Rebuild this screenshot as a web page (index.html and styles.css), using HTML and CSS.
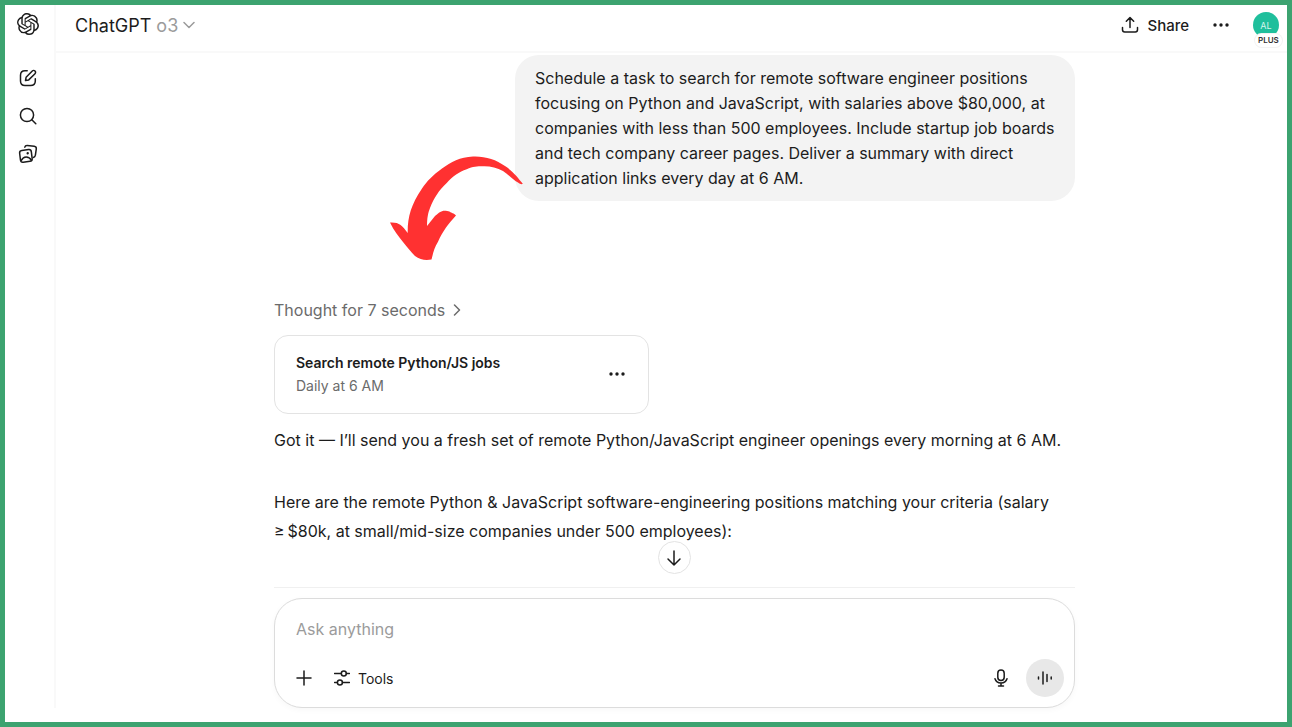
FILE: index.html
```
<!DOCTYPE html>
<html lang="en">
<head>
  <meta charset="UTF-8">
  <meta name="viewport" content="width=device-width, initial-scale=1.0">
  <title>ChatGPT</title>
  <link rel="stylesheet" href="styles.css">
</head>
<body>
  <nav class="sidebar" aria-label="Sidebar">
    <a class="logo" href="#" aria-label="Home">
      <svg width="22" height="22" viewBox="0 0 24 24" fill="currentColor"><path d="M22.2819 9.8211a5.9847 5.9847 0 0 0-.5157-4.9108 6.0462 6.0462 0 0 0-6.5098-2.9A6.0651 6.0651 0 0 0 4.9807 4.1818a5.9847 5.9847 0 0 0-3.9977 2.9 6.0462 6.0462 0 0 0 .7427 7.0966 5.98 5.98 0 0 0 .511 4.9107 6.051 6.051 0 0 0 6.5146 2.9001A5.9847 5.9847 0 0 0 13.2599 24a6.0557 6.0557 0 0 0 5.7718-4.2058 5.9894 5.9894 0 0 0 3.9977-2.9001 6.0557 6.0557 0 0 0-.7475-7.0729zm-9.022 12.6081a4.4755 4.4755 0 0 1-2.8764-1.0408l.1419-.0804 4.7783-2.7582a.7948.7948 0 0 0 .3927-.6813v-6.7369l2.02 1.1686a.071.071 0 0 1 .038.052v5.5826a4.504 4.504 0 0 1-4.4945 4.4944zm-9.6607-4.1254a4.4708 4.4708 0 0 1-.5346-3.0137l.142.0852 4.783 2.7582a.7712.7712 0 0 0 .7806 0l5.8428-3.3685v2.3324a.0804.0804 0 0 1-.0332.0615L9.74 19.9502a4.4992 4.4992 0 0 1-6.1408-1.6464zM2.3408 7.8956a4.485 4.485 0 0 1 2.3655-1.9728V11.6a.7664.7664 0 0 0 .3879.6765l5.8144 3.3543-2.0201 1.1685a.0757.0757 0 0 1-.071 0l-4.8303-2.7865A4.504 4.504 0 0 1 2.3408 7.872zm16.5963 3.8558L13.1038 8.364 15.1192 7.2a.0757.0757 0 0 1 .071 0l4.8303 2.7913a4.4944 4.4944 0 0 1-.6765 8.1042v-5.6772a.79.79 0 0 0-.407-.667zm2.0107-3.0231l-.142-.0852-4.7735-2.7818a.7759.7759 0 0 0-.7854 0L9.409 9.2297V6.8974a.0662.0662 0 0 1 .0284-.0615l4.8303-2.7866a4.4992 4.4992 0 0 1 6.6802 4.66zM8.3065 12.863l-2.02-1.1638a.0804.0804 0 0 1-.038-.0567V6.0742a4.4992 4.4992 0 0 1 7.3757-3.4537l-.142.0805L8.704 5.459a.7948.7948 0 0 0-.3927.6813zm1.0976-2.3654l2.602-1.4998 2.6069 1.4998v2.9994l-2.5974 1.4997-2.6067-1.4997Z"/></svg>
    </a>
    <a href="#" aria-label="New chat">
      <svg class="line" width="18" height="18" viewBox="0 0 18 18"><path d="M8.200 1.800H6Q1.500 1.800 1.500 6.300v5.700Q1.500 16.500 6 16.500h5.500Q16.300 16.500 16.300 12V9.800"/><path d="M6.500 11.500l.6-3.200L13.300 2a1.900 1.900 0 0 1 2.700 2.700L9.700 10.900z"/></svg>
    </a>
    <a href="#" aria-label="Search chats">
      <svg class="line" width="18" height="18" viewBox="0 0 18 18"><circle cx="8" cy="8" r="6.600"/><path d="M12.800 12.800L16.800 16.800"/></svg>
    </a>
    <a href="#" aria-label="Library">
      <svg class="line" width="20" height="20" viewBox="0 0 20 20"><path d="M6.800 3.200Q7.200 1.300 9.200 1.400l7 .8q2.300.4 2.100 2.600l-.9 6.400q-.4 1.900-2 2.200"/><g transform="rotate(-7 7.800 11.900)"><rect x="2" y="6" width="11.800" height="11.800" rx="2.500"/><path d="M2.800 15.800q2.200-3.200 5.200-2.800 3.400.5 4.800 3.800"/><circle class="dot" cx="10" cy="9.500" r="1.200"/></g></svg>
    </a>
  </nav>

  <div class="page">
    <header class="topbar">
      <button class="model" type="button">
        <span>ChatGPT</span>
        <span class="version">o3</span>
        <svg class="line" width="12" height="8" viewBox="0 0 12 8"><path d="M1 1.500l5 5 5-5"/></svg>
      </button>
      <div class="actions">
        <button class="share" type="button">
          <svg class="line" width="18" height="18" viewBox="0 0 18 18"><path d="M9 11.500V1.800M5.300 5.300L9 1.600l3.700 3.700M1.500 11.500v2.300q0 2.200 2.200 2.200h10.600q2.200 0 2.200-2.200v-2.300"/></svg>
          Share
        </button>
        <button class="more" type="button" aria-label="More">
          <svg width="16" height="4" viewBox="0 0 16 4" fill="currentColor"><circle cx="2" cy="2" r="1.700"/><circle cx="8" cy="2" r="1.700"/><circle cx="14" cy="2" r="1.700"/></svg>
        </button>
        <button class="avatar" type="button">AL<span class="plan">PLUS</span></button>
      </div>
    </header>

    <main class="thread">
      <div class="bubble">Schedule a task to search for remote software engineer positions focusing on Python and JavaScript, with salaries above $80,000, at companies with less than 500 employees. Include startup job boards and tech company career pages. Deliver a summary with direct application links every day at 6 AM.</div>
      <svg class="arrow" width="134" height="106" viewBox="0 0 134 106"><path d="M132.700 27.500C128 22 124 16 115 10C106 3.500 95 0 83 .5C70 1 61 6 52 12.500C43 19 37 25 32 32.500C21 49 17.500 61 17.700 77C12 69 9 66 0 66.500C4 75 9 81 13 86C18 92 21 96 25 100C30 104 36 104.500 41.500 103.500C43 98 44 92 48 85.700C53 75 58 68 66 59.500C64 57 61 57 60 55.700C52 53 50 56 45 60L37 70C37 62 38 57 40 52C44 42 49 34 56.700 27C63 20 69 16 76.700 13.300C83 10.500 87 10.300 93 10.300C100 10 107 12 113 15C119 19 123 24 128 26.500C130 28 132.500 29 132.700 27.500Z"/></svg>

      <button class="thought" type="button">
        Thought for 7 seconds
        <svg class="line" width="8" height="12" viewBox="0 0 8 12"><path d="M1.500 1l5 5-5 5"/></svg>
      </button>

      <section class="task">
        <div>
          <h2>Search remote Python/JS jobs</h2>
          <p>Daily at 6 AM</p>
        </div>
        <button class="more" type="button" aria-label="Task options">
          <svg width="16" height="4" viewBox="0 0 16 4" fill="currentColor"><circle cx="2" cy="2" r="1.700"/><circle cx="8" cy="2" r="1.700"/><circle cx="14" cy="2" r="1.700"/></svg>
        </button>
      </section>

      <div class="reply">
        <p>Got it — I’ll send you a fresh set of remote Python/JavaScript engineer openings every morning at 6 AM.</p>
        <p>Here are the remote Python &amp; JavaScript software-engineering positions matching your criteria (salary ≥&#8239;$80k, at small/mid-size companies under 500 employees):</p>
      </div>
    </main>

    <footer class="bottom">
      <button class="scroll-down" type="button" aria-label="Scroll to bottom">
        <svg class="line" width="16" height="18" viewBox="0 0 16 18"><path d="M8 2v14M2 10l6 6 6-6"/></svg>
      </button>
      <form class="composer">
        <input type="text" placeholder="Ask anything" aria-label="Message">
        <div class="tools">
          <button type="button" aria-label="Add files">
            <svg class="line" width="16" height="16" viewBox="0 0 16 16"><path d="M8 1v14M1 8h14"/></svg>
          </button>
          <button type="button">
            <svg class="line" width="16" height="16" viewBox="0 0 16 16"><path d="M.5 3.500h6.700M12.400 3.500h3.100M.5 12.500h2.800M8.500 12.500h7"/><circle cx="9.800" cy="3.500" r="2.500"/><circle cx="5.900" cy="12.500" r="2.500"/></svg>
            Tools
          </button>
          <div class="voice-tools">
            <button type="button" aria-label="Dictate">
              <svg class="line" width="14" height="18" viewBox="0 0 14 18"><rect x="3.800" y="1" width="6.400" height="10.500" rx="3.200"/><path d="M1 9.800q1.200 4.200 6 4.200t6-4.200M7 14v3M4.500 17h5"/></svg>
            </button>
            <button class="voice" type="button" aria-label="Voice mode">
              <svg class="line" width="16" height="14" viewBox="0 0 16 14"><path d="M1.500 6v2M6 1v12M10 3.500v7M14.200 6v2"/></svg>
            </button>
          </div>
        </div>
      </form>
    </footer>
  </div>
</body>
</html>
```
FILE: styles.css
```
* {
  box-sizing: border-box;
}

body {
  margin: 0;
  min-height: 100vh;
  border: 5px solid #3ca370;
  padding-bottom: 14px;
  display: flex;
  background: #fff;
  color: #1c1c1c;
  font-family: Inter, "Liberation Sans", sans-serif;
  font-size: 16px;
}

button {
  border: none;
  padding: 0;
  background: none;
  color: inherit;
  font: inherit;
  display: flex;
  align-items: center;
  cursor: pointer;
}

h2,
p {
  margin: 0;
}

svg {
  display: block;
  flex: none;
}

.line {
  fill: none;
  stroke: currentColor;
  stroke-width: 1.5;
  stroke-linecap: round;
  stroke-linejoin: round;
}

.line .dot {
  fill: currentColor;
  stroke: none;
}

.sidebar {
  width: 51px;
  border-right: 2px solid #f9f9f9;
  padding-right: 3px;
  flex: none;
  display: flex;
  flex-direction: column;
  align-items: center;
}

.sidebar a {
  height: 38px;
  display: flex;
  align-items: center;
  color: inherit;
}

.sidebar .logo {
  margin-bottom: 16px;
}

.page {
  flex: 1;
  min-width: 0;
  display: flex;
  flex-direction: column;
}

.topbar {
  height: 48px;
  padding: 0 8px 6px 19px;
  border-bottom: 2px solid #f9f9f9;
  display: flex;
  align-items: flex-end;
  justify-content: space-between;
}

.model,
.actions {
  height: 40px;
}

.model {
  gap: 5px;
  font-size: 18px;
}

.version,
.model svg {
  color: #9b9b9b;
}

.actions {
  display: flex;
  align-items: center;
  gap: 24px;
}

.share {
  gap: 8px;
  font-size: 15px;
  font-weight: 500;
}

.avatar {
  position: relative;
  width: 26px;
  height: 26px;
  border-radius: 50%;
  justify-content: center;
  background: #1fbf9c;
  color: #d5f5ec;
  font-size: 9px;
}

.plan {
  position: absolute;
  top: 22px;
  left: 2px;
  padding: 0 3px;
  border-radius: 7px;
  background: #fff;
  box-shadow: 0 0 0 1px #f3f3f3;
  color: #333;
  font-size: 8px;
  font-weight: 600;
  line-height: 13px;
}

.thread {
  position: relative;
  flex: 1;
  width: 100%;
  max-width: 801px;
  margin: 0 auto;
  left: 3px;
  padding-top: 2px;
  display: flex;
  flex-direction: column;
  align-items: flex-start;
}

.bubble {
  align-self: flex-end;
  max-width: 560px;
  padding: 11px 20px 10px;
  border-radius: 24px;
  background: #f3f3f3;
  line-height: 25px;
}

/* hand-drawn pointer from the prompt to the created task */
.arrow {
  position: absolute;
  top: 103px;
  left: 116px;
  fill: #ff3131;
}

.thought {
  gap: 8px;
  margin-top: 97px;
  color: #6b6b6b;
  line-height: 24px;
}

.task {
  width: 375px;
  max-width: 100%;
  margin-top: 13px;
  padding: 15px 23px 16px 21px;
  border: 1px solid #e3e3e3;
  border-radius: 14px;
  display: flex;
  align-items: center;
  justify-content: space-between;
  line-height: 23px;
}

.task h2 {
  font-size: 14px;
  font-weight: 600;
}

.task p {
  color: #6b6b6b;
  font-size: 14px;
}

.reply {
  margin-top: 12px;
  line-height: 29px;
}

.reply p + p {
  margin-top: 33px;
}

.bottom {
  position: relative;
  left: 3px;
  width: 100%;
  max-width: 801px;
  margin: 41px auto 0;
  border-top: 1px solid #f0f0f0;
  padding-top: 10px;
}

.scroll-down {
  position: absolute;
  top: -47px;
  left: calc(50% - 17px);
  width: 33px;
  height: 33px;
  border: 1px solid #e3e3e3;
  border-radius: 50%;
  justify-content: center;
  background: #fff;
}

.composer {
  padding: 18px 10px 10px 21px;
  border: 1px solid #dcdcdc;
  border-radius: 28px;
  background: #fff;
  box-shadow: 0 2px 6px #00000008;
}

.composer input {
  display: block;
  width: 100%;
  height: 24px;
  border: none;
  padding: 0;
  outline: none;
  background: none;
  color: inherit;
  font: inherit;
}

.composer input::placeholder {
  color: #9b9b9b;
}

.tools {
  display: flex;
  align-items: center;
  gap: 22px;
  margin-top: 18px;
  font-size: 14px;
}

.tools button {
  gap: 8px;
}

.voice-tools {
  display: flex;
  align-items: center;
  gap: 18px;
  margin-left: auto;
}

.tools .voice {
  width: 38px;
  height: 38px;
  border-radius: 50%;
  justify-content: center;
  background: #e8e8e8;
}
```
